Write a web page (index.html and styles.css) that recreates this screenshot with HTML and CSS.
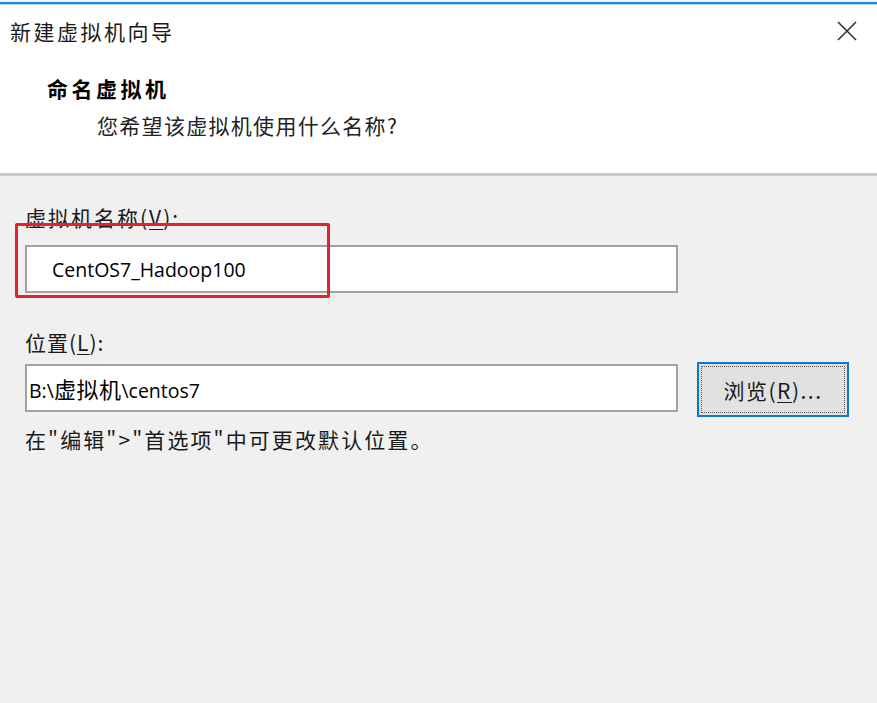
FILE: index.html
```html
<!DOCTYPE html>
<html lang="zh-CN">
<head>
<meta charset="utf-8">
<title>新建虚拟机向导</title>
<link rel="stylesheet" href="styles.css">
</head>
<body>
<div class="dialog">
  <div class="topstrip"></div>
  <div class="accent"></div>
  <div class="header">
    <div class="titlebar">
      <span class="title">新建虚拟机向导</span>
      <svg class="close" width="20" height="20" viewBox="0 0 20 20"><path d="M1 1L19 19M19 1L1 19" stroke="#333" stroke-width="1.6" fill="none"/></svg>
    </div>
    <div class="heading">命名虚拟机</div>
    <div class="subtitle">您希望该虚拟机使用什么名称?</div>
  </div>
  <div class="content">
    <div class="label first">虚拟机名称(<u>V</u>):</div>
    <div class="field-row">
      <div class="input wide"><span class="val pad">CentOS7_Hadoop100</span></div>
    </div>
    <div class="label second">位置(<u>L</u>):</div>
    <div class="field-row tight">
      <div class="input wide"><span class="val">B:\<span class="cjk">虚拟机</span>\centos7</span></div>
      <div class="button"><span class="focus">浏览(<u>R</u>)...</span></div>
    </div>
    <div class="hint">在"编辑"&gt;"首选项"中可更改默认位置。</div>
    <div class="highlight"></div>
  </div>
</div>
</body>
</html>
```
FILE: styles.css
```css
* { box-sizing: border-box; }
html, body { margin: 0; padding: 0; }
body {
  width: 877px;
  height: 703px;
  overflow: hidden;
  font-family: "Noto Sans CJK SC", "Open Sans", sans-serif;
  color: #1a1a1a;
  background: #f0f0f0;
}
.dialog { width: 877px; height: 703px; display: flex; flex-direction: column; }
.topstrip { height: 2px; background: #f4f4f4; }
.accent { height: 2px; background: #1a84dc; }
.header {
  background: #fff;
  border-top: 1px solid #c4def6;
  height: 172px;
  border-bottom: 3px solid #c9c9c9;
}
.titlebar {
  height: 52px;
  display: flex;
  align-items: center;
  justify-content: space-between;
  padding: 0 20px 0 10px;
}
.title { font-size: 21px; line-height: 1; letter-spacing: 2.5px; color: #1a1a1a; }
.close { display: block; }
.heading {
  margin-top: 16px;
  padding-left: 47px;
  font-size: 21px;
  font-weight: bold;
  line-height: 30px;
  letter-spacing: 3.5px;
  color: #000;
}
.subtitle {
  margin-top: 7px;
  padding-left: 97px;
  font-size: 21px;
  line-height: 30px;
  letter-spacing: 1.3px;
  color: #222;
}
.content {
  position: relative;
  flex: 1;
  background: #f0f0f0;
  padding: 26px 0 0 25px;
}
.label { font-size: 21px; line-height: 30px; color: #1a1a1a; }
.label.first { letter-spacing: 2px; }
.label.second { margin-top: 34px; letter-spacing: 1px; }
.label u, .button u { text-decoration-thickness: 1px; text-underline-offset: 3px; }
.field-row { display: flex; align-items: center; gap: 19px; margin-top: 13px; }
.field-row.tight { margin-top: 5px; align-items: flex-start; }
.field-row.tight .input { margin-top: 2px; }
.input {
  width: 653px;
  height: 48px;
  background: #fff;
  border: 2px solid #a2a2a2;
  display: flex;
  align-items: center;
  padding-left: 2px;
}
.val { font-family: "Open Sans", "Noto Sans CJK SC", sans-serif; font-size: 19.5px; color: #000; }
.val .cjk { font-family: "Noto Sans CJK SC", sans-serif; font-size: 22px; letter-spacing: 0.5px; }
.val.pad { padding-left: 23px; }
.button {
  width: 152px;
  height: 55px;
  background: #e1e1e1;
  border: 2px solid #0a78d7;
  padding: 2px;
  display: flex;
}
.focus {
  flex: 1;
  border: 1px dotted #555;
  display: flex;
  align-items: center;
  justify-content: center;
  font-size: 21px;
  letter-spacing: 1.5px;
  color: #1a1a1a;
}
.hint { margin-top: 7px; font-size: 21px; line-height: 30px; letter-spacing: 2.1px; color: #1a1a1a; }
.highlight {
  position: absolute;
  left: 15px;
  top: 47px;
  width: 315px;
  height: 75px;
  border: 3px solid #e8202a;
  border-radius: 2px;
}
```
